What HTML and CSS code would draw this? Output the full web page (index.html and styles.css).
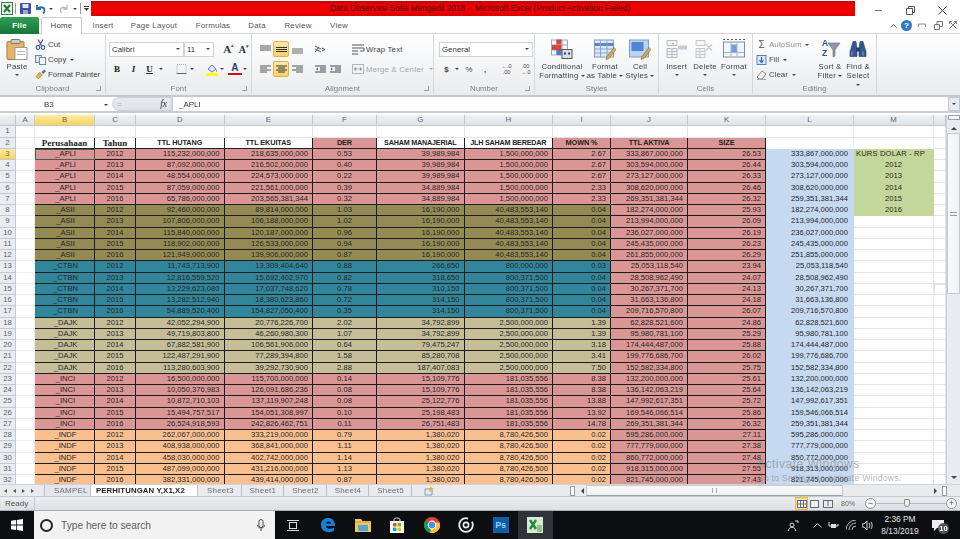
FILE: index.html
```html
<!DOCTYPE html>
<html lang="en">
<head>
<meta charset="utf-8">
<title>Data Observasi Sofia Mengadil 2018 - Microsoft Excel</title>
<link rel="stylesheet" href="styles.css">
</head>
<body>
<div class="app">
  <header class="titlebar">
    <div class="qat">
      <svg class="q-x" width="12" height="13" viewBox="0 0 12 13"><rect x=".5" y=".5" width="11" height="12" fill="#e8f3e6" stroke="#3c7a45"/><path d="M3 3l6 7M9 3l-6 7" stroke="#1d7a33" stroke-width="2"/></svg>
      <i class="qsep"></i>
      <svg class="q-s" width="11" height="11" viewBox="0 0 11 11"><rect width="11" height="11" rx="1" fill="#3d4fa8"/><rect x="2.5" y="1" width="6" height="4" fill="#dfe6f6"/><rect x="3" y="7" width="5" height="4" fill="#9aa8d8"/></svg>
      <svg class="q-u" width="11" height="10" viewBox="0 0 11 10"><path d="M2 1v4h4M2.500 5C4 2.500 9 2.500 9.500 6c.2 1.500-.6 2.700-1.500 3.300" fill="none" stroke="#2b6bb5" stroke-width="1.800"/></svg>
      <i class="arrow a-u"></i>
      <svg class="q-r" width="10" height="10" viewBox="0 0 10 10"><path d="M8 1v4H4M7.500 5C6 2.500 2 2.500 1.500 6c-.2 1.500.4 2.500 1 3" fill="none" stroke="#b5bcc6" stroke-width="1.400"/></svg>
      <i class="arrow a-r"></i>
      <i class="qsep s2"></i>
      <svg class="q-c" width="5" height="6" viewBox="0 0 5 6"><path d="M0 .5h5" stroke="#333"/><path d="M0 2l2.500 3L5 2z" fill="#333"/></svg>
    </div>
    <div class="redbar">Data Observasi Sofia Mengadil 2018 -&nbsp; Microsoft Excel (Product Activation Failed)</div>
    <div class="winctl">
      <span class="wc"><svg width="9" height="9" viewBox="0 0 9 9"><path d="M1 4.500h7" stroke="#777"/></svg></span>
      <span class="wc"><svg width="9" height="9" viewBox="0 0 9 9"><path d="M.5 2.500h6v6h-6zM2.500 2.500v-2h6v6h-2" fill="none" stroke="#555"/></svg></span>
      <span class="wc"><svg width="9" height="9" viewBox="0 0 9 9"><path d="M.5.500l8 8M8.500.500l-8 8" stroke="#444"/></svg></span>
    </div>
  </header>

  <nav class="tabs">
    <span class="tab file">File</span>
    <span class="tab home">Home</span>
    <span class="tab t-ins">Insert</span>
    <span class="tab t-pl">Page Layout</span>
    <span class="tab t-fo">Formulas</span>
    <span class="tab t-da">Data</span>
    <span class="tab t-re">Review</span>
    <span class="tab t-vi">View</span>
    <div class="helpctl">
      <svg width="7" height="5" viewBox="0 0 7 5"><path d="M.5 4.500l3-3 3 3" fill="none" stroke="#555"/></svg>
      <span class="help">?</span>
      <svg width="8" height="6" viewBox="0 0 8 6"><path d="M.5 5V2h7v3" fill="none" stroke="#888"/></svg>
      <svg class="hc-r" width="9" height="9" viewBox="0 0 9 9"><path d="M.5 3.500h5v5h-5zM3 3.500v-3h5.500v5h-3" fill="none" stroke="#777"/></svg>
      <svg width="8" height="8" viewBox="0 0 8 8"><path d="M.5.500l7 7M7.500.500l-7 7M.5 3V.5H3M5 .5h2.500V3" fill="none" stroke="#888"/></svg>
    </div>
  </nav>

  <section class="ribbon">
    <div class="group g-clip">
      <div class="body">
        <div class="lg paste">
          <svg width="22" height="22" viewBox="0 0 22 22"><rect x="1" y="3" width="17" height="18" rx="1" fill="#e6b562" stroke="#a97d35"/><rect x="5" y="1" width="9" height="4" rx="1" fill="#c9c9c9" stroke="#777"/><path d="M9 9h12v12H9z" fill="#fdfdfd" stroke="#99a"/><path d="M11 13h8M11 16h8" stroke="#bbb"/></svg>
          <span>Paste</span><i class="arrow"></i>
        </div>
        <div class="smcol">
          <div class="sm"><svg width="11" height="11" viewBox="0 0 11 11"><path d="M3 .5l3.500 6M8 .5L4.500 6.500" stroke="#556" stroke-width="1.200"/><circle cx="3" cy="8.500" r="1.800" fill="none" stroke="#3a5ea8" stroke-width="1.200"/><circle cx="8" cy="8.500" r="1.800" fill="none" stroke="#3a5ea8" stroke-width="1.200"/></svg><span>Cut</span></div>
          <div class="sm"><svg width="11" height="10" viewBox="0 0 11 10"><rect x=".5" y=".5" width="6" height="7" fill="#dfe9f7" stroke="#6b8ab8"/><rect x="4.500" y="2.500" width="6" height="7" fill="#f7fafd" stroke="#6b8ab8"/></svg><span>Copy</span><i class="arrow"></i></div>
          <div class="sm"><svg width="12" height="11" viewBox="0 0 12 11"><path d="M1 8l4-5 3 3-4 4z" fill="#e7b33c" stroke="#97752a" stroke-width=".6"/><path d="M7 3l3-3 2 2-3 3z" fill="#5c6f8c"/></svg><span>Format Painter</span></div>
        </div>
      </div>
      <div class="glabel"><span>Clipboard</span><i class="launch"></i></div>
    </div>

    <div class="group g-font">
      <div class="body col">
        <div class="line">
          <span class="sel fn">Calibri<i class="arrow"></i></span><span class="sel fs">11<i class="arrow"></i></span>
          <span class="grow">A<sup>▴</sup></span><span class="shrink">A<sup>▾</sup></span>
        </div>
        <div class="line l2">
          <span class="fb fb-b">B</span><span class="fb it">I</span><span class="fb un">U</span><i class="ab"><i class="arrow"></i></i>
          <svg class="bd" width="10" height="10" viewBox="0 0 10 10"><rect x=".5" y=".5" width="9" height="9" fill="none" stroke="#aaa" stroke-dasharray="1 1"/><path d="M0 9.500h10" stroke="#666"/></svg><i class="ab"><i class="arrow"></i></i>
          <svg class="fl" width="12" height="13" viewBox="0 0 12 13"><path d="M2 6l4-4 4 4-4 3z" fill="#dfe8f0" stroke="#5f7da3"/><path d="M10 6l1 2-1 1z" fill="#5f7da3"/><rect y="10" width="12" height="3" fill="#ffff1e"/></svg><i class="ab n"><i class="arrow"></i></i>
          <span class="tc">A</span><i class="ab n"><i class="arrow"></i></i>
        </div>
      </div>
      <div class="glabel"><span>Font</span><i class="launch"></i></div>
    </div>

    <div class="group g-align">
      <div class="body col">
        <div class="line">
          <span class="al"><svg width="11" height="9" viewBox="0 0 11 9"><path d="M0 1h11M0 3h11M0 5h11" stroke="#555"/></svg></span>
          <span class="al on"><svg width="11" height="9" viewBox="0 0 11 9"><path d="M0 2.500h11M0 4.500h11M0 6.500h11" stroke="#333"/></svg></span>
          <span class="al"><svg width="11" height="9" viewBox="0 0 11 9"><path d="M0 4h11M0 6h11M0 8h11" stroke="#666"/></svg></span>
          <span class="al orient"><svg width="12" height="9" viewBox="0 0 12 9"><path d="M1 1l6 3M1 4l6 3M1 7l4-5" stroke="#556"/><path d="M8 3l3 1.500L8 6" fill="none" stroke="#3a5ea8"/></svg></span>
          <span class="cmd wrap"><svg width="13" height="11" viewBox="0 0 13 11"><path d="M0 1h12M0 4h9M0 7h6M0 10h6" stroke="#555"/><path d="M9 4h3v3H8" fill="none" stroke="#3a5ea8"/></svg>Wrap Text</span>
        </div>
        <div class="line l2">
          <span class="al"><svg width="11" height="9" viewBox="0 0 11 9"><path d="M0 1h11M0 3h7M0 5h11M0 7h7" stroke="#555"/></svg></span>
          <span class="al on"><svg width="11" height="9" viewBox="0 0 11 9"><path d="M0 1h11M2 3h7M0 5h11M2 7h7" stroke="#333"/></svg></span>
          <span class="al"><svg width="11" height="9" viewBox="0 0 11 9"><path d="M0 1h11M4 3h7M0 5h11M4 7h7" stroke="#555"/></svg></span>
          <span class="al ind"><svg width="11" height="9" viewBox="0 0 11 9"><path d="M0 1h11M5 3h6M5 5h6M0 7h11" stroke="#445"/><path d="M3 2.500L1 4l2 1.500z" fill="#2b6bb5"/></svg></span>
          <span class="al ind2"><svg width="11" height="9" viewBox="0 0 11 9"><path d="M0 1h11M5 3h6M5 5h6M0 7h11" stroke="#445"/><path d="M1 2.500L3 4 1 5.500z" fill="#2b6bb5"/></svg></span>
          <span class="cmd merge"><svg width="12" height="10" viewBox="0 0 12 10"><rect x=".5" y=".5" width="11" height="9" fill="#f1f3f6" stroke="#b3b8bf"/><path d="M3 5h6M2 5l2-1.500v3zM10 5L8 3.500v3z" fill="#8a93a0" stroke="#8a93a0" stroke-width=".5"/></svg>Merge &amp; Center<i class="arrow"></i></span>
        </div>
      </div>
      <div class="glabel"><span>Alignment</span><i class="launch"></i></div>
    </div>

    <div class="group g-num">
      <div class="body col">
        <div class="line"><span class="sel gen">General<i class="arrow"></i></span></div>
        <div class="line l2">
          <span class="nm nd">$</span><i class="ab"><i class="arrow"></i></i><span class="nm np">%</span><span class="nm nc">,</span><span class="nm inc"><b>←</b>.0<br>.00</span><span class="nm dec">.00<br><b>→</b>.0</span>
        </div>
      </div>
      <div class="glabel"><span>Number</span><i class="launch"></i></div>
    </div>

    <div class="group g-sty">
      <div class="body">
        <div class="lg w46">
          <svg width="22" height="20" viewBox="0 0 22 20"><rect x=".5" y=".5" width="16" height="15" fill="#f6f8fb" stroke="#9aa9bf"/><path d="M.5 5.500h16M.5 10.500h16M6 .5v15M11 .5v15" stroke="#9aa9bf"/><rect x="5.500" y="0" width="5" height="5" fill="#d8443a"/><rect x="1" y="5.500" width="9.500" height="5" fill="#d8443a"/><rect x="5.500" y="10.500" width="5" height="5" fill="#4a78c8"/><rect x="11" y="10" width="10" height="9" fill="#d9dce2" stroke="#555"/><path d="M13 13h2v2h-2zM17 13h2v2h-2z" fill="#444"/></svg>
          <span>Conditional<br>Formatting <i class="arrow il"></i></span>
        </div>
        <div class="lg w40">
          <svg width="22" height="20" viewBox="0 0 22 20"><rect x=".5" y=".5" width="19" height="17" fill="#dce8f7" stroke="#7f9cc6"/><path d="M.5 5h19" stroke="#5f86c0" stroke-width="3"/><path d="M6.500 1v17M13 1v17M1 9.500h18M1 13.500h18" stroke="#86a5d2"/><path d="M13 17l7-9 2 2-7 9-3 1z" fill="#d8a84c" stroke="#7a6a4a" stroke-width=".6"/></svg>
          <span>Format<br>as Table <i class="arrow il"></i></span>
        </div>
        <div class="lg w30">
          <svg width="22" height="20" viewBox="0 0 22 20"><rect x=".5" y=".5" width="19" height="17" fill="#bcd3ef" stroke="#7f9cc6"/><rect x="2.500" y="2.500" width="12" height="9" fill="#4c86d4"/><path d="M13 17l7-9 2 2-7 9-3 1z" fill="#d8a84c" stroke="#7a6a4a" stroke-width=".6"/></svg>
          <span>Cell<br>Styles <i class="arrow il"></i></span>
        </div>
      </div>
      <div class="glabel"><span>Styles</span></div>
    </div>

    <div class="group g-cell">
      <div class="body">
        <div class="lg w29">
          <svg width="22" height="20" viewBox="0 0 22 20"><path d="M1 1h10v5H1zM1 9h10v9H1zM1 12h10M1 15h10M6 9v9" fill="#f2f4f7" stroke="#b6bcc5"/><rect x="12" y="6" width="9" height="4" fill="#c5cad2"/><path d="M7 3v3M6 4l2 0" stroke="#bbb"/></svg>
          <span>Insert</span><i class="arrow"></i>
        </div>
        <div class="lg w28">
          <svg width="20" height="20" viewBox="0 0 20 20"><path d="M1 1h9v5H1zM1 9h9v9H1zM1 12h9M1 15h9M5 9v9" fill="#f2f4f7" stroke="#c3c8cf"/><path d="M11 5l6 6M17 5l-6 6" stroke="#c7ccd3" stroke-width="1.500"/></svg>
          <span>Delete</span><i class="arrow"></i>
        </div>
        <div class="lg w30">
          <svg width="22" height="22" viewBox="0 0 22 22"><rect x=".5" y="3.500" width="21" height="15" fill="#f2f6fb" stroke="#7f8ea3"/><rect x="8" y="6" width="6" height="8" fill="#6f9fe0"/><path d="M8 4v14M14 4v14M1 14h20" stroke="#a7b4c5"/><path d="M0 1h22" stroke="#556" stroke-dasharray="2 2"/></svg>
          <span>Format</span><i class="arrow"></i>
        </div>
      </div>
      <div class="glabel"><span>Cells</span></div>
    </div>

    <div class="group g-edit">
      <div class="body">
        <div class="smcol edcol">
          <div class="sm dim"><span class="sig">Σ</span><span>AutoSum</span><i class="arrow"></i></div>
          <div class="sm"><svg width="10" height="10" viewBox="0 0 10 10"><rect x=".5" y=".5" width="9" height="9" fill="#dbe8f8" stroke="#5a83bd"/><path d="M5 2v5M3 5l2 2.500L7 5" fill="none" stroke="#2b6bb5" stroke-width="1.200"/></svg><span>Fill</span><i class="arrow"></i></div>
          <div class="sm"><svg width="11" height="10" viewBox="0 0 11 10"><path d="M1 7l5-6 4 3-4 5H3z" fill="#f6f7f9" stroke="#7e8591"/><path d="M1 9.500h9" stroke="#aaa"/></svg><span>Clear</span><i class="arrow"></i></div>
        </div>
        <div class="lg w28">
          <svg width="22" height="21" viewBox="0 0 22 21"><path d="M9 4h12l-5 7v6l-2 1v-7z" fill="#8d98a8" stroke="#626d7c" stroke-width=".6"/></svg>
          <b class="az">A<br>Z</b>
          <span>Sort &amp;<br>Filter <i class="arrow il"></i></span>
        </div>
        <div class="lg w28">
          <svg width="20" height="20" viewBox="0 0 20 20"><path d="M3 9l2-7h3l1 7v8H2v-5zM17 9l-2-7h-3l-1 7v8h7v-5z" fill="#35598f" stroke="#233f6b" stroke-width=".6"/><rect x="8" y="8" width="4" height="4" fill="#233f6b"/><path d="M4 12v4M15 12v4" stroke="#8aa6d0"/></svg>
          <span>Find &amp;<br>Select <i class="arrow il"></i></span>
        </div>
      </div>
      <div class="glabel"><span>Editing</span></div>
    </div>
    <div class="g-rest"></div>
  </section>

  <section class="formula">
    <div class="namebox">B3<i class="arrow"></i></div>
    <div class="fxbox"><span class="cancel">=</span><span class="fx">fx</span></div>
    <div class="finput">_APLI</div>
    <div class="fexpand"><i class="arrow"></i></div>
  </section>

  <section class="sheet">
    <div class="grid">
      <div class="row head"><span class="corner"></span><span>A</span><span class="act">B</span><span>C</span><span>D</span><span>E</span><span>F</span><span>G</span><span>H</span><span>I</span><span>J</span><span>K</span><span>L</span><span>M</span><span></span></div>
      <div class="row blank"><span class="rh">1</span><span></span><span></span><span></span><span></span><span></span><span></span><span></span><span></span><span></span><span></span><span></span><span></span><span></span><span></span></div>
      <div class="row titles"><span class="rh">2</span><span></span><span class="th serif">Perusahaan</span><span class="th serif">Tahun</span><span class="th">TTL HUTANG</span><span class="th">TTL EKUITAS</span><span class="th pk">DER</span><span class="th sq">SAHAM MANAJERIAL</span><span class="th sq">JLH SAHAM BEREDAR</span><span class="th pk">MOWN %</span><span class="th pk">TTL AKTIVA</span><span class="th pk">SIZE</span><span class="gl"></span><span class="gl"></span><span></span></div>
      <div class="row pink"><span class="rh act">3</span><span></span><span class="co sel-cell">_APLI</span><span class="yr">2012</span><span>115,232,000,000</span><span>218,635,000,000</span><span class="der">0.53</span><span>39,989,984</span><span>1,500,000,000</span><span>2.67</span><span class="pj">333,867,000,000</span><span class="pj">26.53</span><span class="bl">333,867,000,000</span><span class="gn lft">KURS DOLAR - RP</span><span></span></div>
      <div class="row pink"><span class="rh">4</span><span></span><span class="co">_APLI</span><span class="yr">2013</span><span>87,092,000,000</span><span>216,502,000,000</span><span class="der">0.40</span><span>39,989,984</span><span>1,500,000,000</span><span>2.67</span><span class="pj">303,594,000,000</span><span class="pj">26.44</span><span class="bl">303,594,000,000</span><span class="gn">2012</span><span></span></div>
      <div class="row pink"><span class="rh">5</span><span></span><span class="co">_APLI</span><span class="yr">2014</span><span>48,554,000,000</span><span>224,573,000,000</span><span class="der">0.22</span><span>39,989,984</span><span>1,500,000,000</span><span>2.67</span><span class="pj">273,127,000,000</span><span class="pj">26.33</span><span class="bl">273,127,000,000</span><span class="gn">2013</span><span></span></div>
      <div class="row pink"><span class="rh">6</span><span></span><span class="co">_APLI</span><span class="yr">2015</span><span>87,059,000,000</span><span>221,561,000,000</span><span class="der">0.39</span><span>34,889,984</span><span>1,500,000,000</span><span>2.33</span><span class="pj">308,620,000,000</span><span class="pj">26.46</span><span class="bl">308,620,000,000</span><span class="gn">2014</span><span></span></div>
      <div class="row pink"><span class="rh">7</span><span></span><span class="co">_APLI</span><span class="yr">2016</span><span>65,786,000,000</span><span>203,565,381,344</span><span class="der">0.32</span><span>34,889,984</span><span>1,500,000,000</span><span>2.33</span><span class="pj">269,351,381,344</span><span class="pj">26.32</span><span class="bl">259,351,381,344</span><span class="gn">2015</span><span></span></div>
      <div class="row olive"><span class="rh">8</span><span></span><span class="co">_ASII</span><span class="yr">2012</span><span>92,460,000,000</span><span>89,814,000,000</span><span class="der">1.03</span><span>16,190,000</span><span>40,483,553,140</span><span>0.04</span><span class="pj">182,274,000,000</span><span class="pj">25.93</span><span class="bl">182,274,000,000</span><span class="gn">2016</span><span></span></div>
      <div class="row olive"><span class="rh">9</span><span></span><span class="co">_ASII</span><span class="yr">2013</span><span>107,806,000,000</span><span>106,188,000,000</span><span class="der">1.02</span><span>16,190,000</span><span>40,483,553,140</span><span>0.04</span><span class="pj">213,994,000,000</span><span class="pj">26.09</span><span class="bl">213,994,000,000</span><span></span><span></span></div>
      <div class="row olive"><span class="rh">10</span><span></span><span class="co">_ASII</span><span class="yr">2014</span><span>115,840,000,000</span><span>120,187,000,000</span><span class="der">0.96</span><span>16,190,000</span><span>40,483,553,140</span><span>0.04</span><span class="pj">236,027,000,000</span><span class="pj">26.19</span><span class="bl">236,027,000,000</span><span></span><span></span></div>
      <div class="row olive"><span class="rh">11</span><span></span><span class="co">_ASII</span><span class="yr">2015</span><span>118,902,000,000</span><span>126,533,000,000</span><span class="der">0.94</span><span>16,190,000</span><span>40,483,553,140</span><span>0.04</span><span class="pj">245,435,000,000</span><span class="pj">26.23</span><span class="bl">245,435,000,000</span><span></span><span></span></div>
      <div class="row olive"><span class="rh">12</span><span></span><span class="co">_ASII</span><span class="yr">2016</span><span>121,949,000,000</span><span>139,906,000,000</span><span class="der">0.87</span><span>16,190,000</span><span>40,483,553,140</span><span>0.04</span><span class="pj">261,855,000,000</span><span class="pj">26.29</span><span class="bl">251,855,000,000</span><span></span><span></span></div>
      <div class="row teal"><span class="rh">13</span><span></span><span class="co">_CTBN</span><span class="yr">2012</span><span>11,743,713,900</span><span>13,309,404,640</span><span class="der">0.88</span><span>266,650</span><span>800,000,000</span><span>0.03</span><span class="pj">25,053,118,540</span><span class="pj">23.94</span><span class="bl">25,053,118,540</span><span></span><span></span></div>
      <div class="row teal"><span class="rh">14</span><span></span><span class="co">_CTBN</span><span class="yr">2013</span><span>12,816,559,520</span><span>15,692,402,970</span><span class="der">0.82</span><span>318,650</span><span>800,371,500</span><span>0.04</span><span class="pj">28,508,962,490</span><span class="pj">24.07</span><span class="bl">28,508,962,490</span><span></span><span></span></div>
      <div class="row teal"><span class="rh">15</span><span></span><span class="co">_CTBN</span><span class="yr">2014</span><span>13,229,623,080</span><span>17,037,748,620</span><span class="der">0.78</span><span>310,150</span><span>800,371,500</span><span>0.04</span><span class="pj">30,267,371,700</span><span class="pj">24.13</span><span class="bl">30,267,371,700</span><span></span><span class="boxed"></span></div>
      <div class="row teal"><span class="rh">16</span><span></span><span class="co">_CTBN</span><span class="yr">2015</span><span>13,282,512,940</span><span>18,380,623,860</span><span class="der">0.72</span><span>314,150</span><span>800,371,500</span><span>0.04</span><span class="pj">31,663,136,800</span><span class="pj">24.18</span><span class="bl">31,663,136,800</span><span></span><span></span></div>
      <div class="row teal"><span class="rh">17</span><span></span><span class="co">_CTBN</span><span class="yr">2016</span><span>54,889,520,400</span><span>154,827,050,400</span><span class="der">0.35</span><span>314,150</span><span>800,371,500</span><span>0.04</span><span class="pj">209,716,570,800</span><span class="pj">26.07</span><span class="bl">209,716,570,800</span><span></span><span></span></div>
      <div class="row tan"><span class="rh">18</span><span></span><span class="co">_DAJK</span><span class="yr">2012</span><span>42,052,294,900</span><span>20,776,226,700</span><span class="der">2.02</span><span>34,792,899</span><span>2,500,000,000</span><span>1.39</span><span class="pj">62,828,521,600</span><span class="pj">24.86</span><span class="bl">62,828,521,600</span><span></span><span></span></div>
      <div class="row tan"><span class="rh">19</span><span></span><span class="co">_DAJK</span><span class="yr">2013</span><span>49,719,803,800</span><span>46,260,980,300</span><span class="der">1.07</span><span>34,792,899</span><span>2,500,000,000</span><span>1.39</span><span class="pj">95,980,781,100</span><span class="pj">25.29</span><span class="bl">95,980,781,100</span><span></span><span></span></div>
      <div class="row tan"><span class="rh">20</span><span></span><span class="co">_DAJK</span><span class="yr">2014</span><span>67,882,581,900</span><span>106,561,906,000</span><span class="der">0.64</span><span>79,475,247</span><span>2,500,000,000</span><span>3.18</span><span class="pj">174,444,487,000</span><span class="pj">25.88</span><span class="bl">174,444,487,000</span><span></span><span></span></div>
      <div class="row tan"><span class="rh">21</span><span></span><span class="co">_DAJK</span><span class="yr">2015</span><span>122,487,291,900</span><span>77,289,394,800</span><span class="der">1.58</span><span>85,280,708</span><span>2,500,000,000</span><span>3.41</span><span class="pj">199,776,686,700</span><span class="pj">26.02</span><span class="bl">199,776,686,700</span><span></span><span></span></div>
      <div class="row tan"><span class="rh">22</span><span></span><span class="co">_DAJK</span><span class="yr">2016</span><span>113,280,603,900</span><span>39,292,730,900</span><span class="der">2.88</span><span>187,407,083</span><span>2,500,000,000</span><span>7.50</span><span class="pj">152,582,334,800</span><span class="pj">25.75</span><span class="bl">152,582,334,800</span><span></span><span></span></div>
      <div class="row pink"><span class="rh">23</span><span></span><span class="co">_INCI</span><span class="yr">2012</span><span>16,500,000,000</span><span>115,700,000,000</span><span class="der">0.14</span><span>15,109,776</span><span>181,035,556</span><span>8.38</span><span class="pj">132,200,000,000</span><span class="pj">25.61</span><span class="bl">132,200,000,000</span><span></span><span></span></div>
      <div class="row pink"><span class="rh">24</span><span></span><span class="co">_INCI</span><span class="yr">2013</span><span>10,050,376,983</span><span>126,091,686,236</span><span class="der">0.08</span><span>15,109,776</span><span>181,035,556</span><span>8.38</span><span class="pj">136,142,063,219</span><span class="pj">25.64</span><span class="bl">136,142,063,219</span><span></span><span></span></div>
      <div class="row pink"><span class="rh">25</span><span></span><span class="co">_INCI</span><span class="yr">2014</span><span>10,872,710,103</span><span>137,119,907,248</span><span class="der">0.08</span><span>25,122,776</span><span>181,035,556</span><span>13.88</span><span class="pj">147,992,617,351</span><span class="pj">25.72</span><span class="bl">147,992,617,351</span><span></span><span></span></div>
      <div class="row pink"><span class="rh">26</span><span></span><span class="co">_INCI</span><span class="yr">2015</span><span>15,494,757,517</span><span>154,051,308,997</span><span class="der">0.10</span><span>25,198,483</span><span>181,035,556</span><span>13.92</span><span class="pj">169,546,066,514</span><span class="pj">25.86</span><span class="bl">159,546,066,514</span><span></span><span></span></div>
      <div class="row pink"><span class="rh">27</span><span></span><span class="co">_INCI</span><span class="yr">2016</span><span>26,524,918,593</span><span>242,826,462,751</span><span class="der">0.11</span><span>26,751,483</span><span>181,035,556</span><span>14.78</span><span class="pj">269,351,381,344</span><span class="pj">26.32</span><span class="bl">259,351,381,344</span><span></span><span></span></div>
      <div class="row orange"><span class="rh">28</span><span></span><span class="co">_INDF</span><span class="yr">2012</span><span>262,067,000,000</span><span>333,219,000,000</span><span class="der">0.79</span><span>1,380,020</span><span>8,780,426,500</span><span>0.02</span><span class="pj">595,286,000,000</span><span class="pj">27.11</span><span class="bl">595,286,000,000</span><span></span><span></span></div>
      <div class="row orange"><span class="rh">29</span><span></span><span class="co">_INDF</span><span class="yr">2013</span><span>408,938,000,000</span><span>368,841,000,000</span><span class="der">1.11</span><span>1,380,020</span><span>8,780,426,500</span><span>0.02</span><span class="pj">777,779,000,000</span><span class="pj">27.38</span><span class="bl">777,779,000,000</span><span></span><span></span></div>
      <div class="row orange"><span class="rh">30</span><span></span><span class="co">_INDF</span><span class="yr">2014</span><span>458,030,000,000</span><span>402,742,000,000</span><span class="der">1.14</span><span>1,380,020</span><span>8,780,426,500</span><span>0.02</span><span class="pj">860,772,000,000</span><span class="pj">27.48</span><span class="bl">850,772,000,000</span><span></span><span></span></div>
      <div class="row orange"><span class="rh">31</span><span></span><span class="co">_INDF</span><span class="yr">2015</span><span>487,099,000,000</span><span>431,216,000,000</span><span class="der">1.13</span><span>1,380,020</span><span>8,780,426,500</span><span>0.02</span><span class="pj">918,315,000,000</span><span class="pj">27.55</span><span class="bl">918,313,000,000</span><span></span><span></span></div>
      <div class="row orange"><span class="rh">32</span><span></span><span class="co">_INDF</span><span class="yr">2016</span><span>382,331,000,000</span><span>439,414,000,000</span><span class="der">0.87</span><span>1,380,020</span><span>8,780,426,500</span><span>0.02</span><span class="pj">821,745,000,000</span><span class="pj">27.43</span><span class="bl">821,745,000,000</span><span></span><span></span></div>
    </div>
    <div class="vscroll">
      <div class="vsplit"></div>
      <div class="vup"></div>
      <div class="vthumb"><i></i></div>
      <div class="vdown"></div>
    </div>
    <div class="watermark"><div class="w1">Activate Windows</div><div class="w2">Go to Settings to activate Windows.</div></div>
  </section>

  <section class="sheetbar">
    <div class="nav"><i class="n1"></i><i class="n2"></i><i class="n3"></i><i class="n4"></i></div>
    <span class="st s-sampel">SAMPEL</span>
    <span class="st cur">PERHITUNGAN Y,X1,X2</span>
    <span class="st">Sheet3</span><span class="st">Sheet1</span><span class="st">Sheet2</span><span class="st">Sheet4</span><span class="st">Sheet5</span>
    <span class="newsheet"><svg width="11" height="10" viewBox="0 0 11 10"><path d="M1 3h7v6H1z" fill="#e3edf8" stroke="#7f9cc6"/><path d="M7 0l1 2 2 .5-1.500 1.200.3 2L7 5l-1.800.7.3-2L4 2.500 6 2z" fill="#e7b33c"/></svg></span>
    <div class="hscroll">
      <i class="hsplit"></i><i class="hl"></i>
      <div class="hthumb"><i></i></div>
      <i class="hr"></i><i class="hsplit2"></i>
    </div>
  </section>

  <footer class="status">
    <span class="ready">Ready</span>
    <div class="zoomarea">
      <span class="vb on"><svg width="10" height="8" viewBox="0 0 10 8"><rect x=".5" y=".5" width="9" height="7" fill="#fff" stroke="#667"/><path d="M3.500 0v8M6.500 0v8M0 4h10" stroke="#667"/></svg></span>
      <span class="vb"><svg width="9" height="8" viewBox="0 0 9 8"><rect x=".5" y=".5" width="8" height="7" fill="#eee" stroke="#667"/></svg></span>
      <span class="vb"><svg width="10" height="8" viewBox="0 0 10 8"><rect x=".5" y=".5" width="9" height="7" fill="#eee" stroke="#667"/><path d="M5 0v6" stroke="#667"/></svg></span>
      <span class="pct">80%</span>
      <span class="zb">−</span>
      <span class="slider"><i></i></span>
      <span class="zb">+</span>
    </div>
  </footer>

  <footer class="taskbar">
    <span class="tb start"><svg width="12" height="12" viewBox="0 0 12 12"><path d="M0 1.700L5 1v4.600H0zM5.800.9L12 0v5.600H5.800zM0 6.400h5V11l-5-.7zM5.800 6.400H12V12l-6.200-.9z" fill="#fff"/></svg></span>
    <div class="search">
      <i class="ring"></i>
      <span class="ph">Type here to search</span>
      <svg class="mic" width="8" height="12" viewBox="0 0 8 12"><rect x="2" y=".5" width="4" height="8" rx="2" fill="none" stroke="#444"/><path d="M.5 6c0 4 7 4 7 0M4 9.500V12" fill="none" stroke="#444"/></svg>
    </div>
    <span class="tb i-tv"><svg width="12" height="11" viewBox="0 0 12 11"><rect x="2.500" y="2.500" width="7" height="6" fill="none" stroke="#ddd"/><path d="M0 .5h12M0 10.500h12" stroke="#ddd"/></svg></span>
    <span class="tb ti"><svg width="16" height="16" viewBox="0 0 16 16"><path d="M1 8C1 3 5 .5 9 1c4 .6 6 3.500 6 8H6c.2 3 4.500 3.800 8 1.500v3.500C9 16.500 1 15 1 8zm5-1.500h5C11 4 7 3.500 6 6.500z" fill="#1581d8"/></svg></span>
    <span class="tb ti"><svg width="16" height="14" viewBox="0 0 16 14"><path d="M0 1h6l1.500 2H16v11H0z" fill="#f3c85c"/><rect x="3" y="7" width="10" height="6" fill="#53a6d8"/><rect x="0" y="3" width="16" height="2" fill="#e6ae3a"/></svg></span>
    <span class="tb ti"><svg width="16" height="16" viewBox="0 0 16 16"><path d="M1 4h14v12H1z" fill="#fff"/><path d="M5 5V2.500C5 .5 11 .5 11 2.500V5" fill="none" stroke="#ddd"/><rect x="4" y="6" width="3.500" height="3.500" fill="#f25022"/><rect x="8.500" y="6" width="3.500" height="3.500" fill="#7fba00"/><rect x="4" y="10.500" width="3.500" height="3.500" fill="#00a4ef"/><rect x="8.500" y="10.500" width="3.500" height="3.500" fill="#ffb900"/></svg></span>
    <span class="tb ti"><svg width="16" height="16" viewBox="0 0 16 16"><circle cx="8" cy="8" r="8" fill="#db4437"/><path d="M8 8L1.100 4A8 8 0 0 0 6 15.800z" fill="#0f9d58"/><path d="M8 8l-2 7.800A8 8 0 0 0 15.700 5.500H8z" fill="#fbc02d"/><circle cx="8" cy="8" r="3.800" fill="#4a8cf0" stroke="#fff" stroke-width="1.200"/></svg></span>
    <span class="tb ti"><svg width="16" height="16" viewBox="0 0 16 16"><circle cx="8" cy="8" r="6.800" fill="none" stroke="#eee" stroke-width="1.800" stroke-dasharray="34 5"/><circle cx="8" cy="8" r="2.600" fill="none" stroke="#eee" stroke-width="1.600"/></svg></span>
    <span class="tb ti"><span class="ps">Ps</span></span>
    <span class="tb ti xl"><svg width="16" height="16" viewBox="0 0 16 16"><rect width="16" height="16" fill="#dbe8d4"/><path d="M3 3l6 9M9 3l-6 9" stroke="#1f8a3f" stroke-width="2.400"/><path d="M10 8h5v7h-5z" fill="#8bc28c"/></svg></span>
    <div class="tray">
      <svg width="11" height="11" viewBox="0 0 11 11"><circle cx="4" cy="5" r="2" fill="none" stroke="#ddd"/><path d="M.5 11c0-5 7-5 7 0M7 1h3v2" fill="none" stroke="#ddd"/></svg>
      <svg class="t-up" width="9" height="5" viewBox="0 0 9 5"><path d="M.5 4.500l4-4 4 4" fill="none" stroke="#ddd"/></svg>
      <svg width="12" height="8" viewBox="0 0 12 8"><path d="M1 1v4h9V3" fill="none" stroke="#ddd"/><rect x="3" y="3" width="5" height="4" fill="#ddd"/></svg>
      <svg width="10" height="10" viewBox="0 0 10 10"><path d="M0 10a10 10 0 0 1 10-10M3 10a7 7 0 0 1 7-7M6 10a4 4 0 0 1 4-4" fill="none" stroke="#bbb"/></svg>
      <svg width="11" height="9" viewBox="0 0 11 9"><path d="M0 3h2l3-3v9L2 6H0z" fill="none" stroke="#ddd"/><path d="M7 2c1 1.500 1 3.500 0 5M9 1c1.500 2 1.500 5 0 7" fill="none" stroke="#ddd"/></svg>
      <div class="clock"><div>2:36 PM</div><div>8/13/2019</div></div>
      <span class="notif"><svg width="12" height="11" viewBox="0 0 12 11"><path d="M0 0h12v8H5L2 11V8H0z" fill="#eee"/></svg><b>10</b></span>
    </div>
  </footer>
</div>
</body>
</html>
```

FILE: styles.css
```css
* { box-sizing: border-box; }
html, body { margin: 0; padding: 0; background: #fff; }
body { width: 960px; height: 539px; overflow: hidden; font-family: "Liberation Sans", Arial, sans-serif; color: #333; }
i { font-style: normal; display: inline-block; }

.app { width: 960px; height: 539px; display: flex; flex-direction: column; filter: blur(.5px); }

.arrow { width: 0; height: 0; border-left: 2px solid transparent; border-right: 2px solid transparent; border-top: 2px solid #444; }

/* title bar */
.titlebar { height: 17px; display: flex; align-items: stretch; background: #fff; flex: none; }
.qat { width: 91px; flex: none; display: flex; align-items: center; }
.q-x { margin-left: 1px; }
.qsep { width: 1px; height: 11px; background: #999; margin-left: 2px; }
.q-s { margin-left: 4px; }
.q-u { margin-left: 4px; }
.a-u { margin-left: 3px; }
.q-r { margin-left: 6px; }
.a-r { margin-left: 4px; }
.s2 { margin-left: 3px; }
.q-c { margin-left: 3px; }
.redbar { width: 764px; margin: 1px 0; background: linear-gradient(#c40000, #f00000 30%, #f20000 70%, #d80000); color: #470507; font-size: 8.300px; line-height: 15px; text-align: left; padding-left: 239px; white-space: nowrap; }
.winctl { flex: 1; display: flex; padding: 2px 0 0 7px; }
.wc { width: 32px; display: flex; justify-content: center; align-items: center; height: 16px; }

/* tabs */
.tabs { height: 17px; flex: none; display: flex; font-size: 7.800px; background: #fff; position: relative; border-bottom: 1px solid #d4d7db; letter-spacing: .25px; color: #555; }
.tab { height: 16px; line-height: 18px; display: block; text-align: center; flex: none; }
.file { width: 39px; background: linear-gradient(#2f9e55, #17753a); color: #fff; font-weight: bold; border-radius: 2px 2px 0 0; height: 17px; }
.home { width: 41px; margin-left: 2px; height: 17px; background: #fff; border: 1px solid #c8ccd1; border-bottom: 0; border-radius: 2px 2px 0 0; color: #444; line-height: 16px; }
.t-ins { width: 42px; }
.t-pl { width: 60px; }
.t-fo { width: 58px; }
.t-da { width: 30px; }
.t-re { width: 52px; }
.t-vi { width: 30px; }
.helpctl { margin-left: auto; display: flex; align-items: center; gap: 6px; padding-right: 3px; height: 16px; }
.hc-r { margin-left: 2px; }
.help { width: 11px; height: 11px; margin-left: -2px; border-radius: 50%; background: #2f79c8; color: #fff; font-size: 8px; font-weight: bold; text-align: center; line-height: 11px; letter-spacing: 0; }

/* ribbon */
.ribbon { height: 63px; flex: none; display: flex; background: linear-gradient(#fff, #f7f8f9 35%, #e9ebee); border-bottom: 2px solid #c5c8cd; font-size: 7.800px; color: #444; letter-spacing: .05px; }
.group { flex: none; display: flex; flex-direction: column; border-right: 1px solid #d4d7db; height: 60px; margin-top: 0; }
.g-clip { width: 106px; }
.g-font { width: 146px; }
.g-align { width: 182px; }
.g-num { width: 101px; }
.g-sty { width: 124px; }
.g-cell { width: 94px; }
.g-edit { width: 124px; }
.g-rest { flex: 1; }
.body { height: 49px; display: flex; padding-top: 4px; flex: none; }
.body.col { flex-direction: column; padding-top: 7px; }
.glabel { height: 11px; text-align: center; line-height: 11px; color: #7a7f86; position: relative; font-size: 7.800px; }
.launch { position: absolute; right: 4px; top: 3px; width: 5px; height: 5px; border-right: 1px solid #999; border-bottom: 1px solid #999; }

.lg { display: flex; flex-direction: column; align-items: center; text-align: center; line-height: 9px; flex: none; position: relative; letter-spacing: .2px; }
.lg > svg { height: 23px; flex: none; margin-bottom: 1px; }
.lg > .arrow { margin-top: 3px; }
.arrow.il { vertical-align: middle; }
.paste { width: 35px; padding-right: 1px; }
.w46 { width: 46px; }
.w40 { width: 40px; }
.w30 { width: 30px; }
.w29 { width: 29px; }
.w28 { width: 28px; }
.g-sty .body { padding-left: 4px; }
.g-cell .body { padding-left: 3px; }
.g-edit .body { padding-left: 3px; }
.az { position: absolute; left: 6px; top: 0; font-size: 8.500px; line-height: 10px; color: #2b57a8; font-weight: bold; text-align: left; }

.smcol { display: flex; flex-direction: column; gap: 4px; padding-top: 1px; }
.sm { height: 11px; display: flex; align-items: center; gap: 2px; line-height: 11px; white-space: nowrap; }
.sm svg { width: 11px; flex: none; }
.sm .arrow { margin-left: 2px; }
.edcol { width: 60px; }
.dim { color: #9096a0; }
.sig { width: 11px; text-align: center; font-size: 10px; color: #556; }

.line { display: flex; align-items: center; height: 16px; flex: none; }
.l2 { margin-top: 4px; }
.g-font .line { padding-left: 3px; }
.sel { background: #fff; border: 1px solid #cfd3d8; height: 15px; line-height: 13px; display: flex; justify-content: space-between; align-items: center; padding: 0 3px 0 2px; color: #333; }
.fn { width: 79px; }
.fs { width: 31px; }
.gen { width: 94px; margin-left: 5px; }
.grow, .shrink { font-family: "Liberation Serif", serif; font-weight: bold; width: 15px; text-align: center; font-size: 10px; }
.grow { margin-left: 8px; font-size: 11px; color: #333; }
.shrink { margin-left: 1px; color: #333; }
sup { font-size: 5px; color: #2b6bb5; vertical-align: top; line-height: 6px; }
.fb { text-align: center; font-family: "Liberation Serif", serif; font-size: 9px; font-weight: bold; color: #222; flex: none; }
.fb-b { width: 16px; }
.it { width: 17px; font-style: italic; }
.un { width: 15px; text-decoration: underline; }
.ab { width: 8px; display: flex; justify-content: center; flex: none; }
.ab.n { width: 6px; }
.bd { margin-left: 10px; flex: none; width: 13px; }
.bd + .ab { margin-right: 9px; }
.fl { flex: none; width: 14px; }
.fl + .ab { margin-right: 3px; }
.tc { width: 14px; text-align: center; font-weight: bold; font-family: "Liberation Sans", sans-serif; font-size: 10px; color: #2c3f72; border-bottom: 2.500px solid #d01010; line-height: 9px; height: 12px; flex: none; }

.g-align .body { padding-left: 5px; }
.al { width: 16px; height: 16px; display: flex; align-items: center; justify-content: center; flex: none; border: 1px solid transparent; }
.al.on { background: linear-gradient(#fbe7a6, #f8d26f); border-color: #e2b24a; border-radius: 2px; }
.orient { margin-left: 7px; margin-right: 24px; }
.ind { margin-left: 7px; }
.ind2 { margin-left: -1px; margin-right: 9px; }
.cmd { display: flex; align-items: center; gap: 1px; flex: none; white-space: nowrap; letter-spacing: .2px; }
.cmd svg { flex: none; }
.merge { color: #a2a7ae; gap: 2px; }
.merge .arrow { margin-left: 3px; border-top-color: #aaa; }

.nm { text-align: center; flex: none; }
.nd { width: 13px; margin-left: 6px; font-weight: bold; }
.np { width: 14px; margin-left: 1px; }
.nc { width: 14px; margin-left: 2px; font-weight: bold; }
.inc, .dec { width: 17px; font-size: 5.500px; line-height: 6px; color: #444; letter-spacing: 0; }
.inc b, .dec b { color: #2b6bb5; }
.inc { margin-left: 6px; }
.dec { margin-left: 2px; }

/* formula bar */
.formula { height: 16px; flex: none; display: flex; background: #fff; border-bottom: 2px solid #c9ccd1; font-size: 8px; color: #333; }
.namebox { width: 112px; display: flex; align-items: center; padding: 1px 4px 0 44px; justify-content: space-between; }
.fxbox { width: 60px; background: linear-gradient(#e7eaee, #dfe2e6); border: 1px solid #cfd3d8; border-radius: 7px 0 0 7px; display: flex; align-items: center; justify-content: space-between; padding: 0 4px; }
.cancel { color: #aaa; }
.fx { font-family: "Liberation Serif", serif; font-style: italic; font-size: 9.500px; }
.finput { flex: 1; padding-left: 6px; line-height: 15px; border-left: 1px solid #c9ccd1; }
.fexpand { width: 12px; background: #e8ebef; border: 1px solid #c3c7cd; display: flex; align-items: center; justify-content: center; }

/* sheet */
.sheet { height: 371px; flex: none; display: flex; position: relative; padding-top: 2px; background: #fff; overflow: hidden; }
.grid { width: 946px; height: 369px; overflow: hidden; display: grid; grid-template-columns: 16px 19px 60px 41px 88.500px 88.500px 64px 87.500px 88.500px 58px 77px 78px 88px 80px 12px; grid-auto-rows: 11.260px; font-size: 7.600px; color: #262626; }
.row { display: contents; }
.row > span { display: block; border-right: 1px solid #e2e4e7; border-bottom: 1px solid #e2e4e7; line-height: 10.500px; white-space: nowrap; overflow: hidden; text-align: right; padding-right: 4px; }
.head > span { background: linear-gradient(#eef0f3, #dfe3e8); border-color: #c4c9cf; text-align: center; padding: 0; color: #5e646c; font-size: 7.800px; }
.head > .act { background: linear-gradient(#fdeaa8, #fbd45f); color: #7a6a30; }
.row > .rh { background: #e9edf2; border-color: #c4c9cf; text-align: center; padding: 0; color: #5e646c; font-size: 7.800px; }
.row > .rh.act { background: linear-gradient(#fdeaa8, #fbd45f); color: #7a6a30; }
.row > .th { text-align: center; padding: 0; font-weight: bold; color: #222; border-right-color: #222; border-bottom-color: #222; letter-spacing: -.1px; font-size: 7.300px; }
.row > .serif { font-family: "Liberation Serif", serif; font-size: 9px; letter-spacing: 0; border-right-color: #222; }
.row > .th.pk { background: #da9694; }
.row > .th.sq { letter-spacing: -.2px; font-size: 7.200px; }
.titles > .gl { border-color: #eceef0; border-bottom-color: transparent; }

.pink > span, .olive > span, .teal > span, .tan > span, .orange > span { border-right-color: #1c1c1c; border-bottom-color: #1c1c1c; }
.pink > span { background: #da9694; }
.olive > span { background: #948a54; }
.teal > span { background: #31869b; }
.tan > span { background: #c4bd97; }
.orange > span { background: #fabf8f; }
.row > .rh:first-child { background: #e9edf2; border-color: #c4c9cf; }
.row > .rh.act:first-child { background: linear-gradient(#fdeaa8, #fbd45f); }
.row > span:nth-child(2) { background: #fff; border-color: #eceef0; }
.head > span:nth-child(2) { background: linear-gradient(#eef0f3, #dfe3e8); border-color: #c4c9cf; }
.row > .pj { background: #da9694; }
.row > .bl { background: #c5d9f1; border-color: #c5d9f1; padding-right: 5px; }
.row > .gn { background: #c4d79b; border-color: #c4d79b; text-align: center; padding: 0; }
.row > .lft { text-align: left; padding-left: 2px; letter-spacing: .15px; }
.pink > span:nth-last-child(2):not(.gn), .olive > span:nth-last-child(2):not(.gn), .teal > span:nth-last-child(2), .tan > span:nth-last-child(2), .orange > span:nth-last-child(2),
.pink > span:last-child, .olive > span:last-child, .teal > span:last-child, .tan > span:last-child, .orange > span:last-child { background: #fff; border-color: #e2e4e7; }
.row > .co { text-align: center; padding: 0 0 0 2px; }
.row > .yr { text-align: center; padding: 0; }
.row > .der { text-align: center; padding: 0; }
.row > .sel-cell { outline: 1px solid #4a5a50; outline-offset: -1px; }
.row > .boxed { border: 1px solid #333; }

.vscroll { width: 14px; flex: none; background: #e8ebef; border-left: 1px solid #ccd0d5; display: flex; flex-direction: column; align-items: center; height: 369px; }
.vsplit { width: 12px; height: 5px; border: 1px solid #9aa0a8; background: #f4f5f7; margin-bottom: 5px; }
.vup { width: 0; height: 0; border-left: 3px solid transparent; border-right: 3px solid transparent; border-bottom: 3px solid #444; margin-top: 2px; }
.vthumb { width: 13px; height: 161px; margin-top: 3px; background: linear-gradient(90deg, #fafbfc, #eef0f3); border: 1px solid #c6cad0; display: flex; align-items: center; justify-content: center; }
.vthumb i { width: 7px; height: 4px; border-top: 1px solid #999; border-bottom: 1px solid #999; }
.vdown { width: 0; height: 0; border-left: 3px solid transparent; border-right: 3px solid transparent; border-top: 3px solid #444; margin-top: auto; margin-bottom: 5px; }
.watermark { position: absolute; left: 757px; top: 344px; color: rgba(130, 130, 130, .6); white-space: nowrap; }
.w1 { font-size: 12px; line-height: 14px; letter-spacing: .5px; margin-left: 0; }
.w2 { font-size: 8.600px; line-height: 11px; margin-top: 2px; letter-spacing: .25px; }

/* sheet tabs */
.sheetbar { height: 12px; flex: none; background: #e9ebee; display: flex; align-items: center; font-size: 8px; color: #6a7078; letter-spacing: .2px; border-top: 1px solid #cfd2d6; }
.nav { width: 44px; display: flex; padding-left: 4px; gap: 6px; flex: none; }
.nav i { width: 0; height: 0; border-top: 2.500px solid transparent; border-bottom: 2.500px solid transparent; }
.n1, .n2 { border-right: 3px solid #555; }
.n3, .n4 { border-left: 3px solid #555; }
.st { height: 11px; line-height: 11px; padding: 0 7px 0 8px; flex: none; border-right: 1px solid #bcc0c6; }
.s-sampel { padding: 0 8px 0 9px; width: 47px; background: #e3e6ea; border-left: 1px solid #bcc0c6; }
.cur { background: #fff; color: #222; font-weight: bold; padding: 0 5px; letter-spacing: .1px; font-size: 7.800px; width: 107px; margin-right: 1px; }
.newsheet { margin-left: 12px; flex: none; display: flex; }
.hscroll { margin-left: auto; width: 390px; height: 11px; display: flex; align-items: center; flex: none; }
.hsplit { width: 5px; height: 10px; background: #fff; border: 1px solid #999; margin-left: 0; }
.hl { width: 0; height: 0; border-top: 3px solid transparent; border-bottom: 3px solid transparent; border-right: 3px solid #444; margin-left: 6px; }
.hthumb { width: 257px; height: 11px; margin-left: 2px; background: linear-gradient(#fafbfc, #eef0f3); border: 1px solid #c6cad0; border-bottom-color: #9aa0a8; display: flex; align-items: center; justify-content: center; }
.hthumb i { width: 5px; height: 5px; border-left: 1px solid #aaa; border-right: 1px solid #aaa; }
.hr { width: 0; height: 0; border-top: 3px solid transparent; border-bottom: 3px solid transparent; border-left: 3px solid #444; margin-left: 91px; }
.hsplit2 { width: 5px; height: 10px; background: #fff; border: 1px solid #999; margin-left: 5px; }

/* status */
.status { height: 15px; flex: none; background: linear-gradient(#eceef1, #dcdfe3); border-top: 1px solid #c6c9ce; border-bottom: 1px solid #a9adb3; display: flex; align-items: center; font-size: 8px; color: #555; }
.ready { width: 35px; padding-left: 5px; border-right: 1px solid #c3c6cb; height: 13px; line-height: 13px; flex: none; }
.zoomarea { margin-left: auto; display: flex; align-items: center; padding-right: 3px; }
.vb { width: 13px; height: 13px; display: flex; align-items: center; justify-content: center; flex: none; }
.vb.on { background: #fbe09a; border: 1px solid #e3b64e; }
.pct { width: 20px; margin-left: 7px; font-size: 7px; color: #666; }
.zb { width: 11px; height: 11px; border: 1px solid #8f949b; border-radius: 50%; background: #f6f7f8; text-align: center; line-height: 8px; font-size: 9px; margin-left: 4px; flex: none; }
.slider { width: 70px; height: 1px; background: #b5b9bf; position: relative; margin-left: 0; }
.slider i { position: absolute; left: 28px; top: -4px; width: 6px; height: 8px; background: #f1f2f4; border: 1px solid #888; border-radius: 1px 1px 3px 3px; }
.zb:last-child { margin-left: 0; }

/* taskbar */
.taskbar { height: 28px; flex: none; background: #0c0e12; display: flex; align-items: center; color: #eee; }
.tb { display: flex; align-items: center; justify-content: center; flex: none; height: 28px; }
.start { width: 34px; }
.search { width: 241px; height: 28px; background: #f2f2f2; display: flex; align-items: center; color: #555; flex: none; }
.ring { width: 13px; height: 13px; border: 2px solid #222; border-radius: 50%; margin-left: 6px; flex: none; }
.ph { margin-left: 8px; font-size: 10.200px; color: #5c5c5c; flex: 1; }
.mic { margin-right: 10px; flex: none; }
.i-tv { width: 36px; }
.ti { width: 34.500px; }
.ps { width: 16px; height: 16px; background: #0f5ea8; color: #9fd3ff; font-size: 8.500px; text-align: center; line-height: 16px; font-weight: bold; display: block; }
.xl { background: #2f3338; margin-left: 0; }
.tray { margin-left: auto; display: flex; align-items: center; gap: 6px; padding-right: 16px; }
.t-up { margin-left: 8px; }
.clock { width: 50px; margin-left: -4px; text-align: center; font-size: 8.400px; line-height: 12px; color: #e6e6e6; }
.notif { position: relative; display: flex; margin-left: 1px; }
.notif b { position: absolute; right: -5px; bottom: -3px; width: 11px; height: 11px; line-height: 11px; text-align: center; font-size: 7.500px; background: #555; border-radius: 50%; color: #fff; }
```
